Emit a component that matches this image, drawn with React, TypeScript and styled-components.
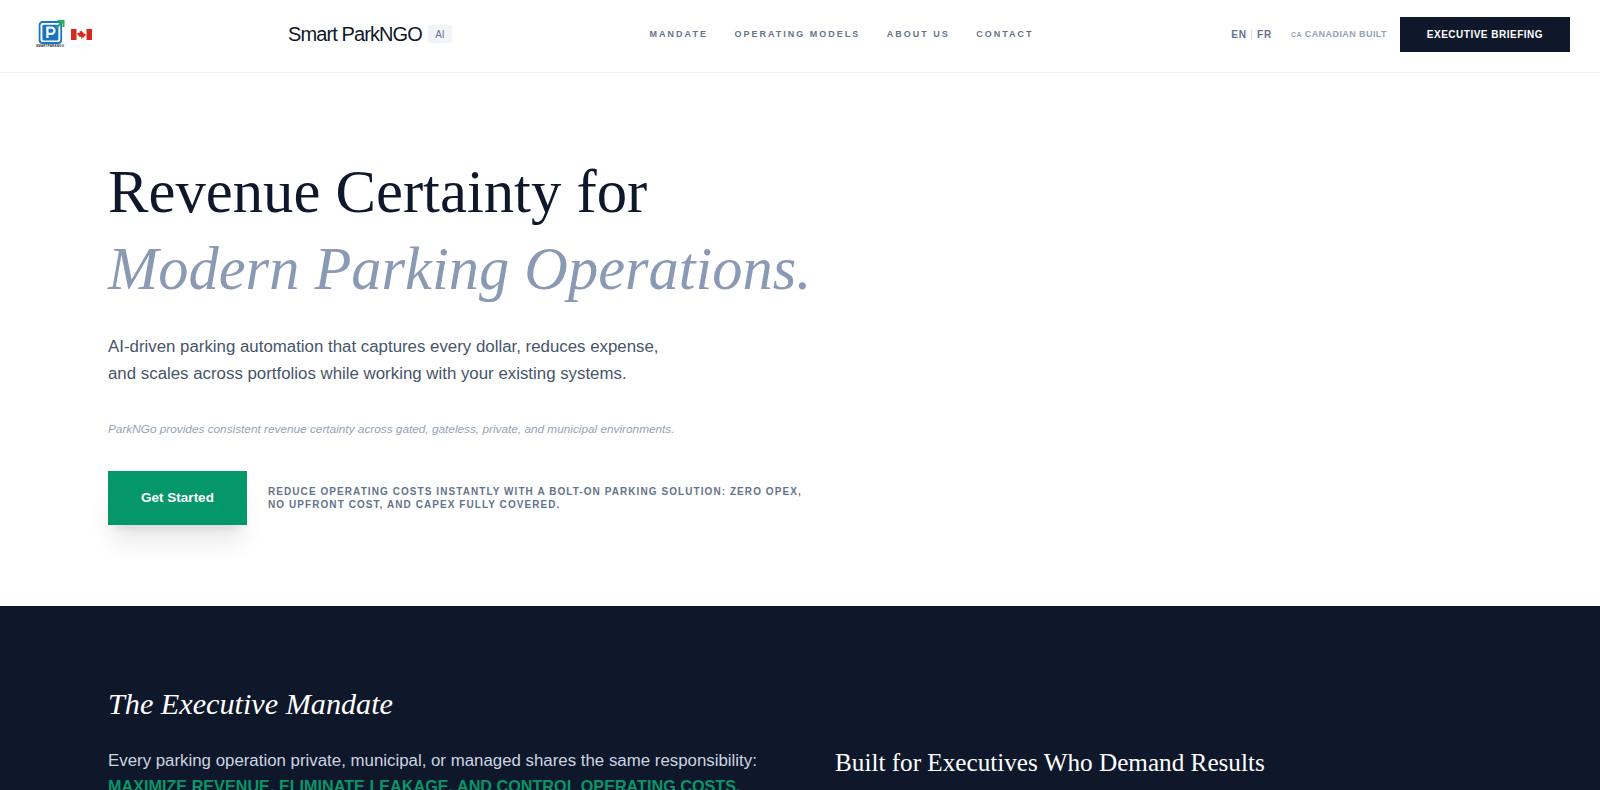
import styled, { createGlobalStyle } from "styled-components"

const GlobalStyle = createGlobalStyle`
    html, body {
        margin: 0;
        padding: 0;
        height: 100%;
        overflow: hidden;
        background: #ffffff;
        font-family: "Liberation Sans", Arial, sans-serif;
    }

    * {
        box-sizing: border-box;
    }
`

const LogoMark = () => (
    <LogoWrap>
        <svg width="29" height="24" viewBox="0 0 29 24" fill="none">
            <rect x="3.6" y="2" width="21.6" height="21" rx="3" fill="#ffffff" stroke="#1a74c4" strokeWidth="1.8" />
            <rect x="6.4" y="4.8" width="16" height="15.6" rx="1.5" fill="#1a74c4" />
            <path d="M11.4 18V7.6h4a3.1 3.1 0 0 1 0 6.2h-4" stroke="#ffffff" strokeWidth="2.2" fill="none" />
            <path d="M20 8L27 1.6M21.5 1h6v6" stroke="#27ae60" strokeWidth="2" fill="none" />
        </svg>
        <LogoCaption>SMARTPARKNGO</LogoCaption>
    </LogoWrap>
)

const CanadaFlag = () => (
    <svg width="21" height="11" viewBox="0 0 21 11">
        <rect width="21" height="11" fill="#ffffff" />
        <rect width="5.5" height="11" fill="#d52b1e" />
        <rect x="15.5" width="5.5" height="11" fill="#d52b1e" />
        <path d="M10.5 1.5l1 1.8.9-.4-.3 2.2 1.2-1 .3.8 1.2-.2-.4 1.3.5.3-2.3 1.7.2.8-2-.2v1.6h-.6V7.8l-2 .2.2-.8-2.3-1.7.5-.3-.4-1.3 1.2.2.3-.8 1.2 1-.3-2.2.9.4z" fill="#d52b1e" />
    </svg>
)

const App = () => {

    return (

        <Page>

            <GlobalStyle />

            <Header>

                <BrandGroup>

                    <LogoRow>
                        <LogoMark />
                        <CanadaFlag />
                    </LogoRow>

                    <BrandName>Smart ParkNGO</BrandName>

                    <AiBadge>AI</AiBadge>

                </BrandGroup>

                <Nav>
                    <NavItem>Mandate</NavItem>
                    <NavItem>Operating Models</NavItem>
                    <NavItem>About Us</NavItem>
                    <NavItem>Contact</NavItem>
                </Nav>

                <RightGroup>

                    <Lang>EN <LangSep>|</LangSep> FR</Lang>

                    <Built><BuiltCode>CA</BuiltCode> Canadian Built</Built>

                    <BriefingButton>Executive Briefing</BriefingButton>

                </RightGroup>

            </Header>

            <Hero>

                <Title>Revenue Certainty for</Title>

                <TitleAccent>Modern Parking Operations.</TitleAccent>

                <Lead>
                    AI-driven parking automation that captures every dollar, reduces expense,<br />
                    and scales across portfolios while working with your existing systems.
                </Lead>

                <Note>ParkNGo provides consistent revenue certainty across gated, gateless, private, and municipal environments.</Note>

                <CtaRow>

                    <CtaButton>Get Started</CtaButton>

                    <CtaText>
                        Reduce operating costs instantly with a bolt-on parking solution: zero OPEX,<br />
                        no upfront cost, and CAPEX fully covered.
                    </CtaText>

                </CtaRow>

            </Hero>

            <Mandate>

                <MandateTitle>The Executive Mandate</MandateTitle>

                <MandateGrid>

                    <div>
                        <MandateText>Every parking operation private, municipal, or managed shares the same responsibility:</MandateText>
                        <MandateStrong>Maximize revenue, eliminate leakage, and control operating costs.</MandateStrong>
                    </div>

                    <MandateSide>Built for Executives Who Demand Results</MandateSide>

                </MandateGrid>

            </Mandate>

        </Page>

    )

}

const Page = styled.div`
    width: 100%;
    min-height: 100vh;
    background: #ffffff;
`

const Header = styled.header`
    height: 73px;
    display: flex;
    align-items: center;
    justify-content: space-between;
    padding: 0 30px 4px 36px;
    border-bottom: 1px solid #f1f5f9;
`

const BrandGroup = styled.div`
    display: flex;
    align-items: center;
`

const LogoRow = styled.div`
    width: 252px;
    display: flex;
    align-items: center;
    gap: 6px;
`

const LogoWrap = styled.div`
    width: 29px;
    display: flex;
    flex-direction: column;
    align-items: flex-start;
`

const LogoCaption = styled.span`
    font-size: 3px;
    line-height: 4px;
    font-weight: 700;
    letter-spacing: 0.2px;
    color: #222222;
    white-space: nowrap;
`

const BrandName = styled.span`
    font-size: 20px;
    letter-spacing: -0.9px;
    color: #0f172a;
`

const AiBadge = styled.span`
    margin-left: 6px;
    width: 24px;
    height: 18px;
    display: flex;
    align-items: center;
    justify-content: center;
    font-size: 10px;
    color: #64748b;
    background: #f1f5f9;
    border-radius: 2px;
`

const Nav = styled.nav`
    display: flex;
    align-items: center;
    gap: 26.5px;
`

const NavItem = styled.span`
    font-size: 9px;
    font-weight: 700;
    letter-spacing: 2px;
    text-transform: uppercase;
    color: #64748b;
`

const RightGroup = styled.div`
    display: flex;
    align-items: center;
`

const Lang = styled.span`
    font-size: 10px;
    font-weight: 700;
    letter-spacing: 0.75px;
    color: #64748b;
`

const LangSep = styled.span`
    color: #cbd5e1;
    font-weight: 400;
`

const Built = styled.span`
    margin-left: 19px;
    font-size: 9px;
    font-weight: 700;
    letter-spacing: 0.42px;
    text-transform: uppercase;
    color: #94a3b8;
`

const BuiltCode = styled.span`
    font-size: 7px;
`

const BriefingButton = styled.button`
    margin-left: 13px;
    width: 170px;
    height: 35px;
    border: none;
    background: #0f172a;
    color: #ffffff;
    font-family: inherit;
    font-size: 10px;
    font-weight: 700;
    letter-spacing: 0.5px;
    text-transform: uppercase;
`

const Hero = styled.section`
    height: 533px;
    padding: 80px 108px 0;
`

const Title = styled.h1`
    margin: 0;
    font-family: "Liberation Serif", "Times New Roman", serif;
    font-size: 60.7px;
    line-height: 77px;
    font-weight: 400;
    color: #0f172a;
`

const TitleAccent = styled(Title)`
    font-size: 60.45px;
    font-style: italic;
    color: #8a9ab5;
`

const Lead = styled.p`
    margin: 26px 0 0;
    font-size: 16.85px;
    line-height: 27px;
    color: #475569;
`

const Note = styled.p`
    margin: 33px 0 0;
    font-size: 11.8px;
    line-height: 18px;
    font-style: italic;
    color: #94a3b8;
`

const CtaRow = styled.div`
    margin-top: 33px;
    display: flex;
    align-items: center;
    gap: 21px;
`

const CtaButton = styled.button`
    width: 139px;
    height: 54px;
    padding: 0 0 2px;
    border: none;
    background: #059669;
    color: #ffffff;
    font-family: inherit;
    font-size: 13.5px;
    font-weight: 700;
    box-shadow: 0 20px 25px -5px rgba(15, 23, 42, 0.1), 0 8px 10px -6px rgba(15, 23, 42, 0.1);
`

const CtaText = styled.p`
    margin: 0;
    font-size: 10px;
    line-height: 13.5px;
    font-weight: 700;
    letter-spacing: 1.07px;
    text-transform: uppercase;
    color: #64748b;
`

const Mandate = styled.section`
    background: #0f172a;
    padding: 80px 108px;
    min-height: 300px;
`

const MandateTitle = styled.h2`
    margin: 0;
    font-family: "Liberation Serif", "Times New Roman", serif;
    font-size: 30.2px;
    line-height: 36px;
    font-weight: 400;
    font-style: italic;
    color: #ffffff;
`

const MandateGrid = styled.div`
    margin-top: 25px;
    display: grid;
    grid-template-columns: 1fr 1fr;
    column-gap: 70px;
    align-items: start;
`

const MandateText = styled.p`
    margin: 0;
    font-size: 16.85px;
    line-height: 27px;
    color: #cbd5e1;
`

const MandateStrong = styled.p`
    margin: 0;
    font-size: 16.2px;
    line-height: 25px;
    font-weight: 700;
    text-transform: uppercase;
    color: #059669;
`

const MandateSide = styled.h3`
    margin: 0;
    font-family: "Liberation Serif", "Times New Roman", serif;
    font-size: 25.2px;
    line-height: 32px;
    font-weight: 400;
    color: #ffffff;
`

export default App
